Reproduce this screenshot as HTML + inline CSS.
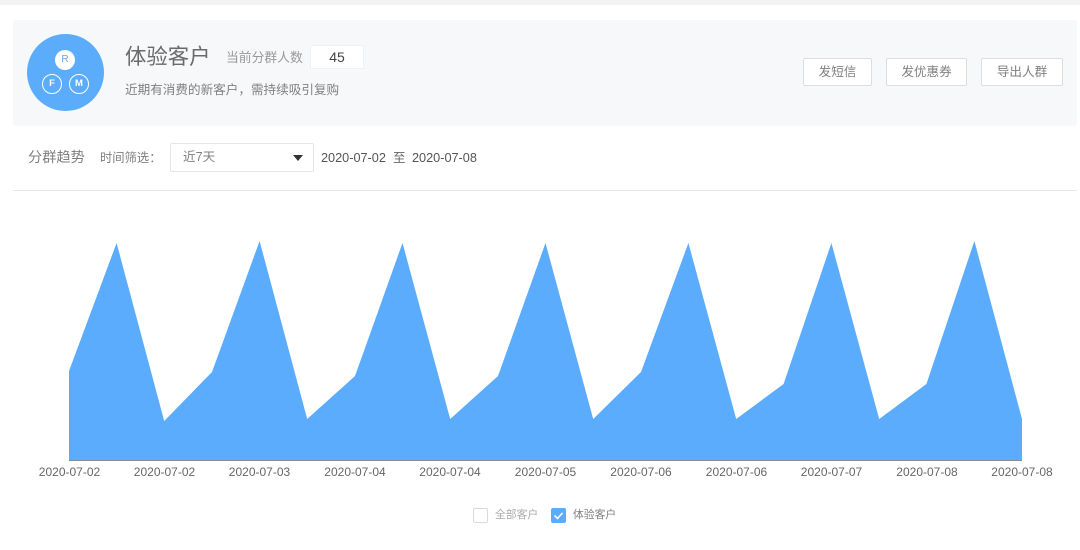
<!DOCTYPE html>
<html lang="zh">
<head>
<meta charset="utf-8">
<style>
html,body{margin:0;padding:0;background:#fff}
body{width:1080px;height:550px;position:relative;overflow:hidden;font-family:"Liberation Sans","Noto Sans CJK SC",sans-serif;color:#666}
#p{position:absolute;left:0;top:0;width:1080px;height:550px;filter:blur(.35px)}
.a{position:absolute;white-space:nowrap}
.btn{position:absolute;top:58px;height:28px;box-sizing:border-box;border:1px solid #dcdee2;border-radius:2px;background:#fff;color:#808080;font-size:12.6px;line-height:27px;text-align:center}
svg{position:absolute;left:0;top:0}
.tick{position:absolute;top:464px;width:80px;text-align:center;font-size:12px;line-height:16px;color:#666}
</style>
</head>
<body>
<div id="p">
<div class="a" style="left:0;top:0;width:1080px;height:5px;background:#f2f2f2"></div>
<div class="a" style="left:13px;top:20px;width:1064px;height:106px;background:#f7f8fa;border-radius:3px"></div>

<div class="a" style="left:27px;top:34px;width:77px;height:77px;border-radius:50%;background:#5cacfc"></div>
<div class="a" style="left:55px;top:50px;width:20px;height:20px;border-radius:50%;background:#fff;color:#6f9fe8;font-size:10px;line-height:20px;text-align:center">R</div>
<div class="a" style="left:42px;top:74px;width:18px;height:18px;border:1px solid #fff;border-radius:50%;color:#fff;font-size:9.5px;font-weight:bold;line-height:18px;text-align:center">F</div>
<div class="a" style="left:69px;top:74px;width:18px;height:18px;border:1px solid #fff;border-radius:50%;color:#fff;font-size:9.5px;font-weight:bold;line-height:18px;text-align:center">M</div>

<div class="a" style="left:125px;top:43px;font-size:21.4px;line-height:28px;color:#6a6a6a">体验客户</div>
<div class="a" style="left:226px;top:49px;font-size:12.8px;line-height:18px;color:#999">当前分群人数</div>
<div class="a" style="left:310px;top:45px;width:52px;height:22px;border:1px solid #f0f1f3;background:#fff;color:#444;font-size:14px;line-height:22px;text-align:center">45</div>
<div class="a" style="left:125px;top:81px;font-size:12.6px;line-height:18px;color:#808080">近期有消费的新客户，需持续吸引复购</div>

<div class="btn" style="left:803px;width:69px">发短信</div>
<div class="btn" style="left:886px;width:81px">发优惠券</div>
<div class="btn" style="left:981px;width:82px">导出人群</div>

<div class="a" style="left:28px;top:148px;font-size:14.2px;line-height:20px;color:#808080">分群趋势</div>
<div class="a" style="left:100px;top:149px;font-size:12.3px;line-height:18px;color:#808080">时间筛选：</div>
<div class="a" style="left:170px;top:143px;width:144px;height:29px;box-sizing:border-box;border:1px solid #e6e6e6;border-radius:2px;background:#fff;font-size:12.6px;line-height:26px;padding-left:12px;color:#808080">近7天</div>
<div class="a" style="left:293px;top:155px;width:0;height:0;border-left:5px solid transparent;border-right:5px solid transparent;border-top:6px solid #333"></div>
<div class="a" style="left:321px;top:149px;font-size:12.7px;line-height:18px;color:#555">2020-07-02</div>
<div class="a" style="left:393px;top:149px;font-size:12.5px;line-height:18px;color:#666">至</div>
<div class="a" style="left:412px;top:149px;font-size:12.7px;line-height:18px;color:#555">2020-07-08</div>
<div class="a" style="left:13px;top:190px;width:1064px;height:1px;background:#e6e6e6"></div>

<svg width="1080" height="550" viewBox="0 0 1080 550">
<polygon fill="#5cacfd" points="69,460 69,371 116.6,243 164.2,421 212,372 259.6,241 307.2,419 355,376 402.5,243 450.2,419 498,376 545.5,243 593.2,419 641,372 688.4,243 736.2,419 783.6,384 831.4,243 879.2,419 926.4,384 974.4,241 1022,419 1022,460"/>
<rect x="69" y="460" width="953" height="1" fill="#7f8c9c"/>
</svg>

<div class="tick" style="left:29.5px">2020-07-02</div>
<div class="tick" style="left:124.5px">2020-07-02</div>
<div class="tick" style="left:219.5px">2020-07-03</div>
<div class="tick" style="left:315px">2020-07-04</div>
<div class="tick" style="left:410px">2020-07-04</div>
<div class="tick" style="left:505.5px">2020-07-05</div>
<div class="tick" style="left:601px">2020-07-06</div>
<div class="tick" style="left:696.5px">2020-07-06</div>
<div class="tick" style="left:791.5px">2020-07-07</div>
<div class="tick" style="left:887px">2020-07-08</div>
<div class="tick" style="left:982px">2020-07-08</div>

<div class="a" style="left:473px;top:508px;width:15px;height:15px;box-sizing:border-box;border:1px solid #d9d9d9;border-radius:2px;background:#fff"></div>
<div class="a" style="left:495px;top:507px;font-size:10.8px;line-height:16px;color:#aaa">全部客户</div>
<div class="a" style="left:551px;top:508px;width:15px;height:15px;border-radius:2px;background:#5cacfc"></div>
<svg width="1080" height="550" viewBox="0 0 1080 550"><path d="M554.5 515.5l3 3 5-5.5" fill="none" stroke="#fff" stroke-width="1.6"/></svg>
<div class="a" style="left:573px;top:507px;font-size:10.8px;line-height:16px;color:#808080">体验客户</div>
</div>
</body>
</html>
